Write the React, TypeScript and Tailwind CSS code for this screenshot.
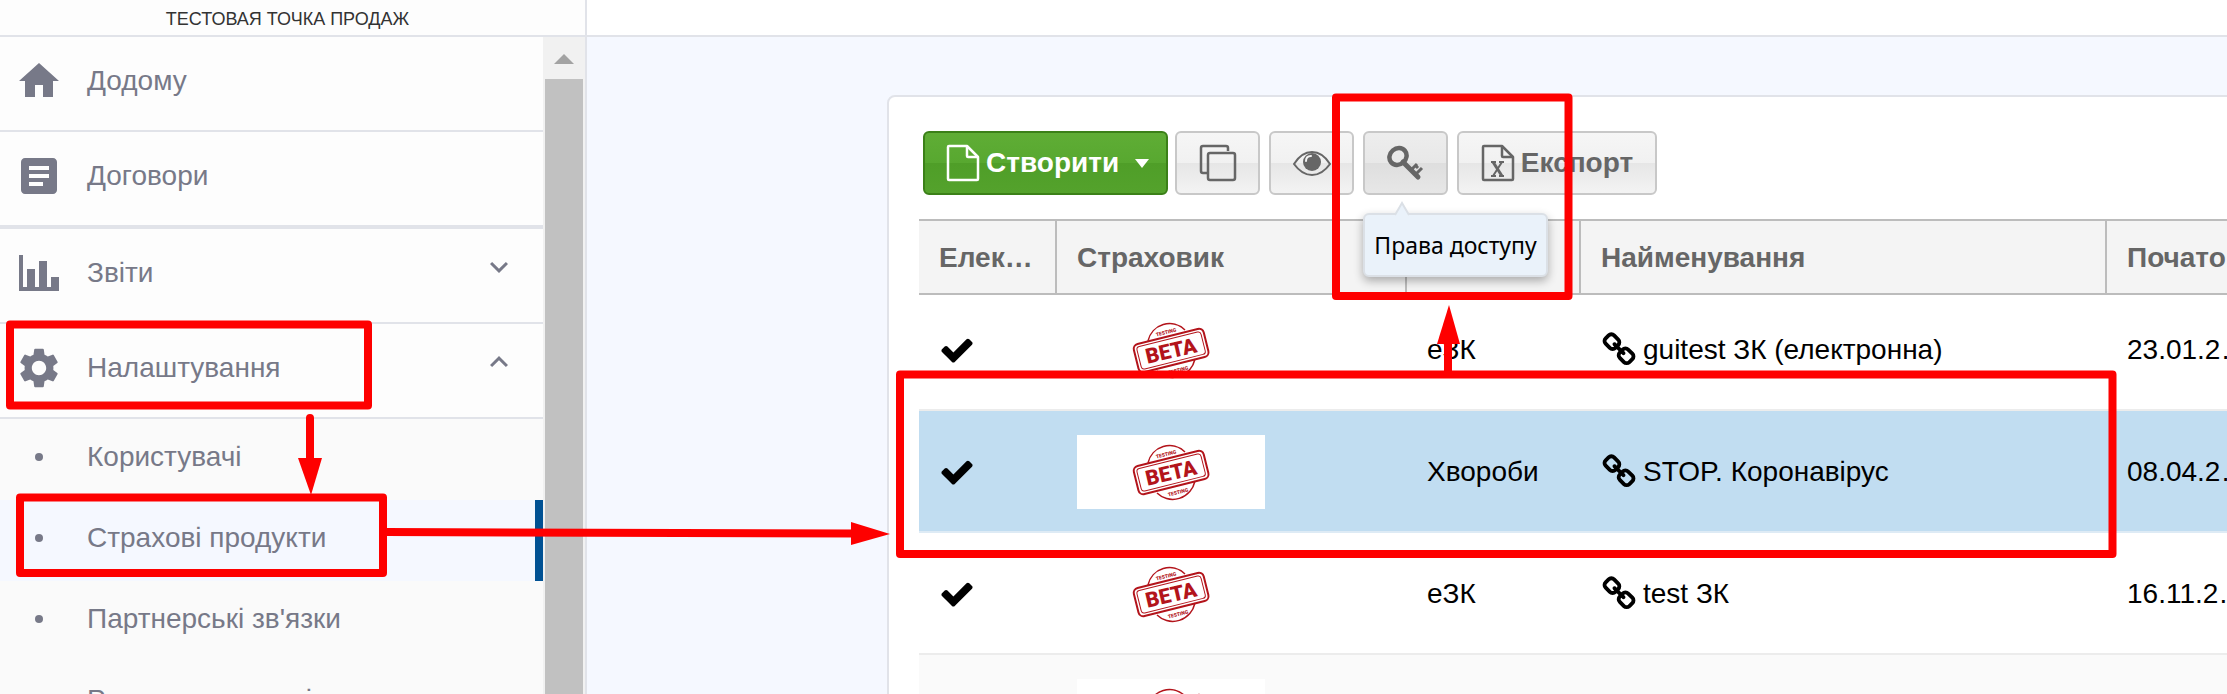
import React, { useState } from "react";
import {
  MdArticle,
  MdExpandLess,
  MdExpandMore,
  MdHome,
  MdSettings,
} from "react-icons/md";

interface ProductType {
  id: number;
  electronic: boolean;
  kind: string;
  title: string;
  start: string;
}

const products: ProductType[] = [
  {
    id: 1,
    electronic: true,
    kind: "еЗК",
    title: "guitest ЗК (електронна)",
    start: "23.01.2…",
  },
  {
    id: 2,
    electronic: true,
    kind: "Хвороби",
    title: "STOP. Коронавірус",
    start: "08.04.2…",
  },
  { id: 3, electronic: true, kind: "еЗК", title: "test ЗК", start: "16.11.2…" },
  { id: 4, electronic: true, kind: "еЗК", title: "test ЗК", start: "16.11.2…" },
];

const subItems = [
  "Користувачі",
  "Страхові продукти",
  "Партнерські зв'язки",
  "Реєстр документів",
];

const ChartIcon = () => (
  <svg width="48" height="48" viewBox="0 0 24 24" fill="currentColor">
    <path d="M2 3h2v16h2v-9h4v9h2V6h4v13h2v-5h4v7H2z" />
  </svg>
);

const FileIcon = () => (
  <svg
    width="34"
    height="38"
    viewBox="0 0 34 38"
    fill="none"
    stroke="currentColor"
    strokeWidth="2.500"
    strokeLinejoin="round"
  >
    <path d="M2 3a1 1 0 0 1 1-1h18l11 11v22a1 1 0 0 1-1 1H3a1 1 0 0 1-1-1z" />
    <path d="M21 2v10a1 1 0 0 0 1 1h10" />
  </svg>
);

const ExcelIcon = () => (
  <svg
    width="34"
    height="38"
    viewBox="0 0 34 38"
    fill="none"
    stroke="currentColor"
    strokeWidth="2.500"
    strokeLinejoin="round"
  >
    <path d="M2 3a1 1 0 0 1 1-1h18l11 11v22a1 1 0 0 1-1 1H3a1 1 0 0 1-1-1z" />
    <path d="M21 2v10a1 1 0 0 0 1 1h10" />
    <path d="M12 18l9 14" strokeWidth="3" />
    <path d="M21 18l-9 14" strokeWidth="2" />
    <path d="M10 18h5M18 18h5M10 32h5M18 32h5" strokeWidth="2" />
  </svg>
);

const CopyIcon = () => (
  <svg
    width="38"
    height="38"
    viewBox="0 0 38 38"
    fill="none"
    stroke="currentColor"
    strokeWidth="2.500"
  >
    <path d="M29 7V4a2 2 0 0 0-2-2H4a2 2 0 0 0-2 2v23a2 2 0 0 0 2 2h4" />
    <rect x="9" y="9" width="27" height="27" rx="2" />
  </svg>
);

const EyeIcon = () => (
  <svg width="38" height="38" viewBox="0 0 38 38" fill="none">
    <path
      d="M1 20C6 12 12 8 19 8s13 4 18 12c-5 7-11 11-18 11S6 27 1 20z"
      stroke="currentColor"
      strokeWidth="2"
    />
    <circle cx="19" cy="18" r="9" fill="currentColor" />
    <path
      d="M13 17c0-3 2-5 5-5"
      stroke="#f3f3f3"
      strokeWidth="2"
      strokeLinecap="round"
    />
  </svg>
);

const KeyIcon = () => (
  <svg
    width="38"
    height="38"
    viewBox="0 0 38 38"
    fill="none"
    stroke="currentColor"
  >
    <ellipse
      cx="11"
      cy="12.500"
      rx="9"
      ry="8"
      strokeWidth="4.500"
      transform="rotate(-40 11 12.500)"
    />
    <path d="M16 18l15 15" strokeWidth="5" strokeLinecap="round" />
    <path d="M24 26l6-6M29 30l6-6" strokeWidth="3" />
    <path d="M28 21l3 3" strokeWidth="3" />
  </svg>
);

const CheckIcon = () => (
  <svg width="36" height="36" viewBox="0 0 1792 1792" fill="currentColor">
    <path d="M1671 566q0 40-28 68l-724 724-136 136q-28 28-68 28t-68-28l-136-136-362-362q-28-28-28-68t28-68l136-136q28-28 68-28t68 28l294 295 656-657q28-28 68-28t68 28l136 136q28 28 28 68z" />
  </svg>
);

const LinkIcon = () => (
  <svg
    className="shrink-0"
    width="36"
    height="36"
    viewBox="0 0 1792 1792"
    fill="currentColor"
  >
    <path d="M1520 1216q0-40-28-68l-208-208q-28-28-68-28-42 0-72 32 3 3 19 18.500t21.500 21.500 15 19 13 25.500 3.500 27.500q0 40-28 68t-68 28q-15 0-27.500-3.500t-25.500-13-19-15-21.500-21.500-18.500-19q-33 31-33 73 0 40 28 68l206 207q27 27 68 27 40 0 68-26l147-146q28-28 28-67zm-703-705q0-40-28-68l-206-207q-28-28-68-28-39 0-68 27l-147 146q-28 28-28 67 0 40 28 68l208 208q27 27 68 27 42 0 72-31-3-3-19-18.500t-21.500-21.500-15-19-13-25.500-3.500-27.500q0-40 28-68t68-28q15 0 27.500 3.500t25.500 13 19 15 21.500 21.500 18.500 19q33-31 33-73zm895 705q0 120-85 203l-147 146q-83 83-203 83-121 0-204-85l-206-207q-83-83-83-203 0-123 88-209l-88-88q-86 88-208 88-120 0-204-84l-208-208q-84-84-84-204t85-203l147-146q83-83 203-83 121 0 204 85l206 207q83 83 83 203 0 123-88 209l88 88q86-88 208-88 120 0 204 84l208 208q84 84 84 204z" />
  </svg>
);

// "BETA / TESTING" rubber stamp used as the insurer logo
const BetaStamp = () => (
  <svg width="80" height="58" viewBox="0 0 80 58" fill="none" stroke="#b3141b">
    <path d="M17 20A22 22 0 0 1 54 9" strokeWidth="1.500" />
    <path d="M26 50A23 24 0 0 0 64 38" strokeWidth="1.500" />
    <g transform="rotate(-14 40 29)">
      <rect x="4" y="15" width="72" height="29" rx="5" strokeWidth="2" />
      <rect x="7" y="18" width="66" height="23" rx="3" />
    </g>
    <g
      fill="#b3141b"
      stroke="none"
      textAnchor="middle"
      className="font-['Roboto',sans-serif] font-black"
    >
      <text x="40" y="37" fontSize="21" transform="rotate(-13 40 29)">
        BETA
      </text>
      <text x="35" y="13" fontSize="5" transform="rotate(-14 35 11)">
        TESTING
      </text>
      <text x="47" y="51" fontSize="5" transform="rotate(-14 47 49)">
        TESTING
      </text>
    </g>
  </svg>
);

// red frames and arrows of the walkthrough
const Guide = () => (
  <svg
    className="absolute left-0 top-0 pointer-events-none"
    width="2227"
    height="694"
    fill="none"
    stroke="#fe0000"
    strokeWidth="8"
    strokeLinecap="round"
    strokeLinejoin="round"
  >
    <rect x="10" y="324.500" width="358" height="81" />
    <rect x="20" y="497.500" width="363" height="75.500" />
    <rect x="1336" y="97.500" width="232.500" height="198.500" />
    <rect x="900" y="374.500" width="1212.500" height="179.500" />
    <path d="M310 418v46M386 532l470 1.500M1448 374v-34" />
    <g fill="#fe0000" stroke="none">
      <path d="M298 458h24l-11 37z" />
      <path d="M851 522v23l39-11z" />
      <path d="M1437 344h23l-11-39z" />
    </g>
  </svg>
);

const toolButton =
  "flex h-16 cursor-pointer items-center justify-center rounded-md border-2 border-[#c8c8c8] bg-[linear-gradient(#f6f6f6,#f1f1f1_50%,#e6e6e6_50%,#f3f3f3)] text-[#666]";
const navItem =
  "flex h-[95px] w-full cursor-pointer items-center gap-6 border-b-2 border-[#e1e3e9] pb-1.5 pl-[15px] text-left";
const th =
  "h-[76px] truncate border-y-2 border-r-2 border-[#bcbcbc] bg-[#f4f4f4] px-5 pt-0.5 text-left font-bold text-[#666]";

const Sidebar: React.FC = () => {
  const [open, setOpen] = useState(true);
  const [active, setActive] = useState("Страхові продукти");

  return (
    <aside className="flex w-[587px] shrink-0 flex-col border-r-2 border-[#e1e3e9] bg-[#fdfdfd]">
      <div className="flex h-[37px] shrink-0 items-center justify-center border-b-2 border-[#e1e3e9] pr-2.5 pt-0.5 text-lg text-[#333]">
        <p>ТЕСТОВАЯ ТОЧКА ПРОДАЖ</p>
      </div>
      <div className="flex min-h-0 flex-1">
        <nav className="flex-1 overflow-hidden text-[#777988]">
          <a href="#home" className={navItem}>
            <MdHome size={48} />
            Додому
          </a>
          <a
            href="#contracts"
            className="flex h-[97px] w-full items-center gap-6 border-b-4 border-[#e1e3e9] pb-1.5 pl-[15px]"
          >
            <MdArticle size={48} />
            Договори
          </a>
          <button type="button" className={navItem}>
            <ChartIcon />
            <span className="flex-1">Звіти</span>
            <MdExpandMore size={36} className="mb-3 mr-[26px]" />
          </button>
          <button
            type="button"
            onClick={() => setOpen(!open)}
            className={navItem}
          >
            <MdSettings size={48} />
            <span className="flex-1">Налаштування</span>
            <MdExpandLess size={36} className="mb-3 mr-[26px]" />
          </button>
          {open && (
            <ul className="bg-[#fafafa]">
              {subItems.map((item) => (
                <li key={item}>
                  <a
                    href="#settings"
                    onClick={() => setActive(item)}
                    className={`flex h-[81px] items-center gap-11 border-r-8 pb-1.5 pl-[35px] whitespace-nowrap ${
                      active === item
                        ? "border-[#005193] bg-[#f5f8ff]"
                        : "border-transparent"
                    }`}
                  >
                    <span className="h-2 w-2 rounded-full bg-[#777988]" />
                    {item}
                  </a>
                </li>
              ))}
            </ul>
          )}
        </nav>
        <div className="flex w-[42px] flex-col bg-[#f1f1f1] px-0.5">
          <div className="flex h-[42px] shrink-0 items-center justify-center pt-0.5">
            <svg width="20" height="10" viewBox="0 0 20 10" fill="#a3a3a3">
              <path d="M10 0l10 10H0z" />
            </svg>
          </div>
          <div className="flex-1 bg-[#c1c1c1]" />
        </div>
      </div>
    </aside>
  );
};

const Toolbar: React.FC = () => (
  <div className="flex gap-[9px] pl-1">
    <div className="flex gap-[7px]">
      <button
        type="button"
        className="flex h-16 w-[245px] cursor-pointer items-center rounded-md border-2 border-[#3b8018] bg-[linear-gradient(#5fad35,#58a830_50%,#4f9e28_50%,#54a22c)] pl-[21px] font-bold text-white"
      >
        <FileIcon />
        <span className="ml-1.5">Створити</span>
        <svg
          className="ml-4"
          width="14"
          height="9"
          viewBox="0 0 14 9"
          fill="currentColor"
        >
          <path d="M0 0h14L7 9z" />
        </svg>
      </button>
      <button
        type="button"
        aria-label="Копіювати"
        className={`${toolButton} w-[85px]`}
      >
        <CopyIcon />
      </button>
    </div>
    <button
      type="button"
      aria-label="Переглянути"
      className={`${toolButton} w-[85px]`}
    >
      <EyeIcon />
    </button>
    <div className="relative">
      <button
        type="button"
        aria-label="Права доступу"
        className="flex h-16 w-[85px] cursor-pointer items-center justify-center rounded-md border-2 border-[#c8c8c8] bg-[linear-gradient(#ededed,#e8e8e8_50%,#dedede_50%,#e7e7e7)] text-[#666]"
      >
        <KeyIcon />
      </button>
      <div
        role="tooltip"
        className="absolute left-0 top-[82px] z-10 flex h-16 w-[185px] items-center justify-center rounded-md border-2 border-[#dbe0e6] bg-[#eaf2fa] font-['Noto_Sans',sans-serif] text-[23px] whitespace-nowrap text-black shadow-[0_4px_10px_rgba(0,0,0,0.3)]"
      >
        <svg
          className="absolute left-[29px] -top-[14px]"
          width="16"
          height="15"
          viewBox="0 0 16 15"
          fill="#eaf2fa"
        >
          <path d="M1 14L8 2l7 12" stroke="#dbe0e6" strokeWidth="2" />
        </svg>
        Права доступу
      </div>
    </div>
    <button
      type="button"
      className={`${toolButton} w-[200px] gap-1.5 font-bold`}
    >
      <ExcelIcon />
      Експорт
    </button>
  </div>
);

const App: React.FC = () => {
  const [selected, setSelected] = useState(2);

  return (
    <div className="relative flex h-screen overflow-hidden bg-[#f5f8ff] font-['Liberation_Sans',Arial,sans-serif] text-[28px] leading-8 text-black">
      <Sidebar />
      <main className="min-w-0 flex-1 overflow-hidden">
        <div className="h-[37px] border-b-2 border-[#e1e3e9] bg-white" />
        <section className="-mr-[60px] ml-[300px] mt-[58px] rounded-lg border-2 border-[#e1e3e9] bg-white pl-[30px] pt-[34px]">
          <Toolbar />
          <table className="mt-6 w-full table-fixed border-separate border-spacing-0">
            <thead>
              <tr>
                <th className={`${th} w-[138px]`}>Електронний</th>
                <th className={`${th} w-[350px]`}>Страховик</th>
                <th className={`${th} w-[174px]`}>Тип</th>
                <th className={`${th} w-[526px]`}>Найменування</th>
                <th className={th}>Початок</th>
              </tr>
            </thead>
            <tbody>
              {products.map((product) => (
                <tr
                  key={product.id}
                  onClick={() => setSelected(product.id)}
                  className={`h-[122px] first:h-[116px] *:border-b-2 *:pb-[22px] *:pl-5 *:align-bottom ${
                    product.id === selected
                      ? "bg-[#c1ddf1] *:border-[#deebf5]"
                      : "bg-white *:border-[#ececec] even:bg-[#fafafa]"
                  }`}
                >
                  <td>
                    <div className="flex h-[74px] items-center">
                      {product.electronic && <CheckIcon />}
                    </div>
                  </td>
                  <td>
                    <div className="flex h-[74px] w-[188px] items-center justify-center bg-white">
                      <BetaStamp />
                    </div>
                  </td>
                  <td>
                    <div className="flex h-[74px] items-center">
                      {product.kind}
                    </div>
                  </td>
                  <td>
                    <div className="flex h-[74px] items-center gap-1.5">
                      <LinkIcon />
                      {product.title}
                    </div>
                  </td>
                  <td>
                    <div className="flex h-[74px] items-center">
                      {product.start}
                    </div>
                  </td>
                </tr>
              ))}
            </tbody>
          </table>
        </section>
      </main>
      <Guide />
    </div>
  );
};

export default App;
